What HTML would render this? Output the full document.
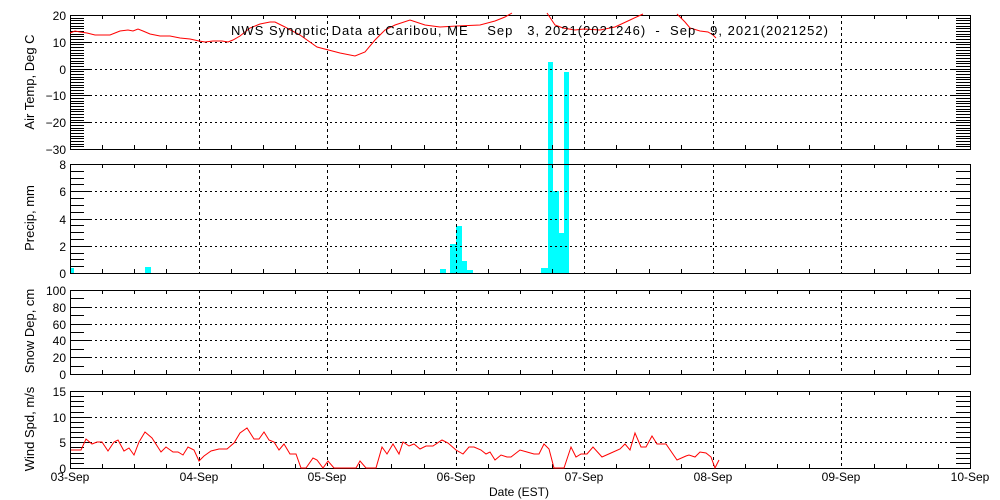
<!DOCTYPE html>
<html><head><meta charset="utf-8"><style>
html,body{margin:0;padding:0;background:#fff;width:1000px;height:500px;overflow:hidden}
svg{display:block}
text{font-family:"Liberation Sans",sans-serif;font-size:12px;fill:#000}
</style></head><body>
<svg id="s" width="1000" height="500" xmlns="http://www.w3.org/2000/svg">
<g id="bars" fill="#00ffff">
<rect x="70" y="268" width="4" height="5"/>
<rect x="145" y="267" width="6" height="6"/>
<rect x="440" y="269" width="6" height="4"/>
<rect x="450" y="244" width="6" height="29"/>
<rect x="456" y="226" width="6" height="47"/>
<rect x="462" y="261" width="5" height="12"/>
<rect x="467" y="270" width="6" height="3"/>
<rect x="541" y="268" width="7" height="5"/>
<rect x="548" y="62" width="5" height="211"/>
<rect x="553" y="191" width="6" height="82"/>
<rect x="559" y="233" width="5" height="40"/>
<rect x="564" y="72" width="5" height="201"/>
</g>
<g id="g" stroke="#000" fill="none" shape-rendering="crispEdges"></g>
<g fill="none" stroke="#f00" stroke-width="1">
<polyline points="70,33 75,31 80,32 87,33 95,35 110,35 115,33 120,31 128,30 133,31 138,29 143,31 150,34 160,36 170,36 180,38 190,39 199,41 205,42 213,41 222,41 228,42 233,40 240,36 250,28 260,24 270,22 275,22 285,27 300,35 317,47 340,53 355,56 365,52 375,40 385,30 395,25 410,20 425,25 440,27 457,26 480,25 495,21 505,17 512,13"/>
<polyline points="547,13 555,25 563,28 575,30 584,29 600,30 615,27 630,20 643,14"/>
<polyline points="677,14 685,22 690,28 700,31 708,32 713,35 716,38"/>
<polyline points="71,450 81,450 86,439 92,444 97,442 102,442 108,451 114,442 118,440 124,451 129,448 134,455 139,442 145,432 152,438 161,452 166,447 173,452 178,452 183,455 188,447 194,450 199,461 204,456 211,451 219,449 227,449 234,443 240,433 247,428 254,439 259,439 264,432 269,440 274,442 279,450 284,444 290,454 296,454 301,468 306,468 313,458 317,460 323,468 328,461 334,468 356,468 360,461 366,468 376,468 382,447 387,454 393,444 399,454 403,442 409,446 414,444 420,449 426,446 433,446 442,440 448,443 456,450 463,454 469,447 474,447 481,450 486,454 490,452 495,460 501,455 507,457 511,457 520,450 527,452 534,454 539,454 544,444 549,449 554,468 564,468 571,447 576,457 581,454 587,454 593,447 602,457 611,453 620,449 625,444 630,450 635,433 641,447 646,447 652,436 657,444 666,444 677,460 686,456 689,455 695,457 700,452 706,453 711,457 715,468 719,460"/>
</g>
<text x="231" y="35" style="font-size:13px;white-space:pre" xml:space="preserve" textLength="597" lengthAdjust="spacing">NWS Synoptic Data at Caribou, ME    Sep   3, 2021(2021246)  -  Sep   9, 2021(2021252)</text>
<g id="t"></g>
<text x="34" y="82" text-anchor="middle" transform="rotate(-90 34 82)" style="font-size:13px">Air Temp, Deg C</text>
<text x="34" y="218" text-anchor="middle" transform="rotate(-90 34 218)" style="font-size:13px">Precip, mm</text>
<text x="34" y="331" text-anchor="middle" transform="rotate(-90 34 331)" style="font-size:13px">Snow Dep, cm</text>
<text x="34" y="429" text-anchor="middle" transform="rotate(-90 34 429)" style="font-size:13px">Wind Spd, m/s</text>
<text x="519" y="496" text-anchor="middle">Date (EST)</text>
</svg>
<script>
var g=document.getElementById('g'),t=document.getElementById('t'),NS='http://www.w3.org/2000/svg';
function L(x1,y1,x2,y2,d){var e=document.createElementNS(NS,'line');e.setAttribute('x1',x1);e.setAttribute('y1',y1);e.setAttribute('x2',x2);e.setAttribute('y2',y2);if(d)e.setAttribute('stroke-dasharray',d);g.appendChild(e);}
function T(x,y,s,a){var e=document.createElementNS(NS,'text');e.setAttribute('x',x);e.setAttribute('y',y);e.setAttribute('text-anchor',a||'end');e.textContent=s;t.appendChild(e);}
var X0=70,X1=970,D=(X1-X0)/7;
var P=[[15,149,20,-30,1,10,[10,0,-10,-20]],[164,273,8,0,0.5,2,[6,4,2]],[290,374,100,0,10,20,[80,60,40,20]],[391,468,15,0,1,5,[10,5]]];
P.forEach(function(p){var top=p[0],bot=p[1],vmax=p[2],vmin=p[3];
function Y(v){return top+(vmax-v)/(vmax-vmin)*(bot-top);}
var r=document.createElementNS(NS,'rect');r.setAttribute('x',X0+.5);r.setAttribute('y',top+.5);r.setAttribute('width',X1-X0);r.setAttribute('height',bot-top);g.appendChild(r);
for(var v=vmin;v<=vmax+1e-6;v+=p[4]){var y=Math.round(Y(v))+.5;L(X0,y,X0+14,y);L(X1-14,y,X1,y);}
for(var v=vmin;v<=vmax+1e-6;v+=p[5]){var y=Math.round(Y(v));T(66,y+5,(v<0?'\u2212'+(-v):''+v));L(X0,y+.5,X0+20,y+.5);L(X1-20,y+.5,X1,y+.5);}
p[6].forEach(function(v){var y=Math.round(Y(v))+.5;L(X0+20,y,X1-20,y,'2,3');});
for(var i=1;i<28;i++){var x=Math.round(X0+i*D/4)+.5;if(i%4==0){L(x,top,x,bot,'3,3');}else{L(x,top,x,top+4);L(x,bot-4,x,bot);}}
});
var labs=['03-Sep','04-Sep','05-Sep','06-Sep','07-Sep','08-Sep','09-Sep','10-Sep'];
labs.forEach(function(s,i){T(Math.round(X0+i*D),481,s,'middle');});
</script>
</body></html>
